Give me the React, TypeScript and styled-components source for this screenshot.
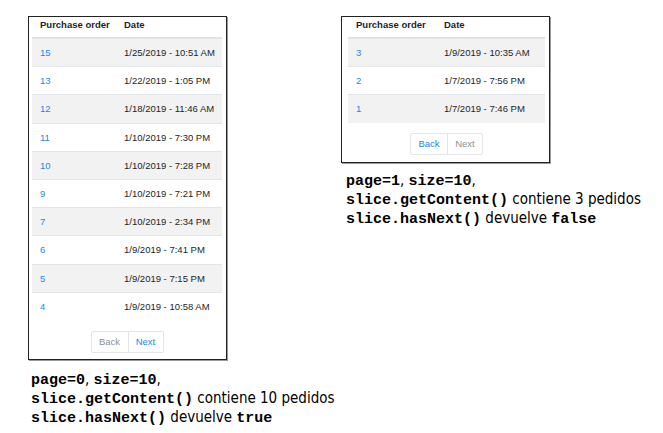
import React from "react";
import styled, { createGlobalStyle } from "styled-components";

const GlobalStyle = createGlobalStyle`
  html, body {
    margin: 0;
    padding: 0;
    background: #fff;
  }
  body {
    font-family: "Liberation Sans", Arial, sans-serif;
  }
`;

type Order = { id: number; date: string };

const firstPage: Order[] = [
  { id: 15, date: "1/25/2019 - 10:51 AM" },
  { id: 13, date: "1/22/2019 - 1:05 PM" },
  { id: 12, date: "1/18/2019 - 11:46 AM" },
  { id: 11, date: "1/10/2019 - 7:30 PM" },
  { id: 10, date: "1/10/2019 - 7:28 PM" },
  { id: 9, date: "1/10/2019 - 7:21 PM" },
  { id: 7, date: "1/10/2019 - 2:34 PM" },
  { id: 6, date: "1/9/2019 - 7:41 PM" },
  { id: 5, date: "1/9/2019 - 7:15 PM" },
  { id: 4, date: "1/9/2019 - 10:58 AM" },
];

const secondPage: Order[] = [
  { id: 3, date: "1/9/2019 - 10:35 AM" },
  { id: 2, date: "1/7/2019 - 7:56 PM" },
  { id: 1, date: "1/7/2019 - 7:46 PM" },
];

const Page = styled.div`
  display: flex;
  align-items: flex-start;
  gap: 114px;
  padding: 16px 0 0 28px;
`;

const Column = styled.div<{ $width: number }>`
  width: ${(p) => p.$width}px;
  display: flex;
  flex-direction: column;
`;

const Frame = styled.div<{ $padL: number; $padR: number; $padB: number }>`
  box-sizing: border-box;
  border: 1px solid #222;
  box-shadow: 1px 1px 0 #9a9a9a;
  padding: 0 ${(p) => p.$padR}px ${(p) => p.$padB}px ${(p) => p.$padL}px;
  display: flex;
  flex-direction: column;
`;

const Row = styled.div<{ $col: number; $striped?: boolean; $head?: boolean }>`
  display: grid;
  grid-template-columns: ${(p) => p.$col}px 1fr;
  align-items: center;
  box-sizing: border-box;
  height: ${(p) => (p.$head ? "21px" : "28.2px")};
  padding: ${(p) => (p.$head ? "0 0 5px" : "0")};
  background: ${(p) => (p.$striped ? "#f2f2f2" : "transparent")};
  border-top: ${(p) => (p.$head ? "none" : "1px solid #e3e6e9")};
  border-bottom: ${(p) => (p.$head ? "1px solid #dde1e5" : "none")};
  font-size: 9.5px;
  color: #212529;
  white-space: nowrap;
`;

const HeadCell = styled.span`
  padding-left: 8px;
  font-weight: bold;
`;

const Cell = styled.span`
  padding-left: 8px;
`;

const OrderLink = styled(Cell)`
  color: #1b87f0;
`;

const Pager = styled.div<{ $top: number }>`
  align-self: center;
  display: flex;
  margin-top: ${(p) => p.$top}px;
  border: 1px solid #e3e6e9;
  border-radius: 2px;
`;

const PageButton = styled.span<{ $enabled: boolean; $width: number }>`
  width: ${(p) => p.$width}px;
  height: 20px;
  display: flex;
  align-items: center;
  justify-content: center;
  font-size: 9.5px;
  color: ${(p) => (p.$enabled ? "#1b87f0" : "#8a9096")};
  & + & {
    border-left: 1px solid #e3e6e9;
  }
`;

const Caption = styled.div<{ $top: number; $indent: number }>`
  margin-top: ${(p) => p.$top}px;
  padding-left: ${(p) => p.$indent}px;
  white-space: nowrap;
  font-family: "DejaVu Sans Condensed", Tahoma, "Liberation Sans", sans-serif;
  font-size: 15px;
  color: #000;
`;

const Line = styled.div`
  height: 19px;
  line-height: 19px;
`;

const Code = styled.code`
  font-family: "Liberation Mono", "Courier New", monospace;
  font-weight: bold;
  font-size: 15px;
  line-height: 19px;
`;

type TableProps = {
  orders: Order[];
  col: number;
  back: boolean;
  next: boolean;
  pagerTop: number;
  padL: number;
  padR: number;
  padB: number;
};

const OrdersTable = ({ orders, col, back, next, pagerTop, padL, padR, padB }: TableProps) => (
  <Frame $padL={padL} $padR={padR} $padB={padB}>
    <Row $col={col} $head>
      <HeadCell>Purchase order</HeadCell>
      <HeadCell>Date</HeadCell>
    </Row>
    {orders.map((o, i) => (
      <Row $col={col} $striped={i % 2 === 0} key={o.id}>
        <OrderLink>{o.id}</OrderLink>
        <Cell>{o.date}</Cell>
      </Row>
    ))}
    <Pager $top={pagerTop}>
      <PageButton $enabled={back} $width={36}>Back</PageButton>
      <PageButton $enabled={next} $width={34}>Next</PageButton>
    </Pager>
  </Frame>
);

const App = () => (
  <>
    <GlobalStyle />
    <Page>
      <Column $width={199}>
        <OrdersTable
          orders={firstPage}
          col={84}
          back={false}
          next={true}
          pagerTop={11}
          padL={3}
          padR={4}
          padB={6}
        />
        <Caption $top={10} $indent={3}>
          <Line>
            <Code>page=0</Code>, <Code>size=10</Code>,
          </Line>
          <Line>
            <Code>slice.getContent()</Code> contiene 10 pedidos
          </Line>
          <Line>
            <Code>slice.hasNext()</Code> devuelve <Code>true</Code>
          </Line>
        </Caption>
      </Column>
      <Column $width={209}>
        <OrdersTable
          orders={secondPage}
          col={88}
          back={true}
          next={false}
          pagerTop={10}
          padL={6}
          padR={4}
          padB={7}
        />
        <Caption $top={8} $indent={5}>
          <Line>
            <Code>page=1</Code>, <Code>size=10</Code>,
          </Line>
          <Line>
            <Code>slice.getContent()</Code> contiene 3 pedidos
          </Line>
          <Line>
            <Code>slice.hasNext()</Code> devuelve <Code>false</Code>
          </Line>
        </Caption>
      </Column>
    </Page>
  </>
);

export default App;
